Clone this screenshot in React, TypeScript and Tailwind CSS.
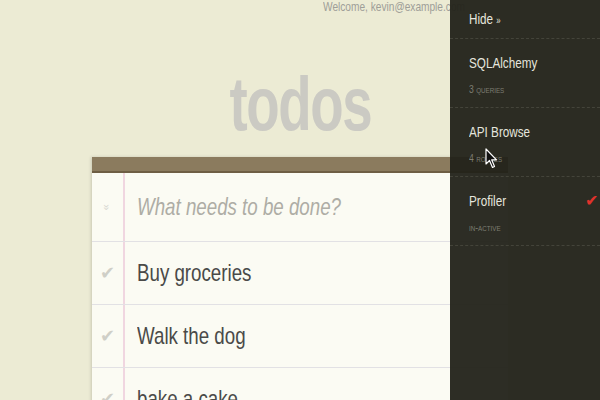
import React from 'react';

const font = { fontFamily: '"Liberation Sans", Arial, sans-serif' };

const todos = ['Buy groceries', 'Walk the dog', 'bake a cake'];

// the shot is squeezed sideways, so text gets a narrow look
function N({ children }: { children: React.ReactNode }) {
  return <span className="inline-block origin-left scale-x-[0.78] whitespace-nowrap">{children}</span>;
}

function Cursor() {
  return (
    <svg className="absolute left-[485px] top-[148px]" width="13" height="21" viewBox="0 0 13 21">
      <path d="M1 1 L1 16 L4.5 12.5 L7.5 19.5 L9.5 18.5 L6.7 11.8 L11.5 11.8 Z" fill="#111" stroke="#fff" strokeWidth="1.2" strokeLinejoin="round" />
    </svg>
  );
}

function PanelItem({ title, sub, active }: { title: string; sub: string; active?: boolean }) {
  return (
    <div className="h-[69px] border-b border-dashed border-[#44443a] pl-[19px] pr-[2px] pt-[15px]">
      <div className="flex items-center justify-between text-[15px] leading-[18px] text-[#e6e6de]">
        <N>{title}</N>
        {active && <span className="text-[16px] leading-[18px] text-[#e1322b]">✔</span>}
      </div>
      <div className="mt-[12px] text-[11px] leading-[10px] text-[#7d7d72] [font-variant:small-caps]">
        <N>{sub}</N>
      </div>
    </div>
  );
}

export default function App() {
  return (
    <div className="relative w-[600px] h-[400px] overflow-hidden bg-[#ecebd4]" style={font}>
      <div className="h-[13px] pl-[323px] text-[13px] leading-[13px] text-[#9e9e98]">
        <N>Welcome, kevin@example.com</N>
      </div>

      <h1 className="mt-[53px] text-center text-[76px] leading-[76px] font-bold tracking-[-2px] text-[#cbcac3]">
        <span className="inline-block scale-x-[0.72]">todos</span>
      </h1>

      <div className="mx-auto mt-[15px] w-[416px] shadow-[-1px_0_3px_rgba(0,0,0,0.15)]">
        <div className="h-[16px] bg-[#8b7b5e] border-b-2 border-[#6e5e44]"></div>
        <div className="bg-[#fbfbf3]">
          <div className="flex h-[69px] border-b border-[#e2e1e4]">
            <div className="flex w-[33px] items-center justify-center border-r-2 border-[#f0d6e0] text-[11px] text-[#d6d6d0]">
              <span className="rotate-90">»</span>
            </div>
            <div className="flex items-center pl-[12px] text-[24px] italic text-[#aeada5]">
              <N>What needs to be done?</N>
            </div>
          </div>
          {todos.map((t) => (
            <div key={t} className="flex h-[63px] border-b border-[#e2e1e4]">
              <div className="flex w-[33px] items-center justify-center border-r-2 border-[#f0d6e0] text-[18px] text-[#cfcfc7]">
                ✔
              </div>
              <div className="flex items-center pl-[12px] text-[24px] text-[#4a4a48]">
                <N>{t}</N>
              </div>
            </div>
          ))}
        </div>
      </div>

      <div className="absolute right-0 top-0 h-full w-[150px] bg-[#222219]/95">
        <div className="h-[39px] border-b border-dashed border-[#44443a] pl-[19px] pt-[10px] text-[15px] leading-[18px] text-[#e6e6de]">
          <N>
            Hide <span className="text-[10px]">»</span>
          </N>
        </div>
        <PanelItem title="SQLAlchemy" sub="3 queries" />
        <PanelItem title="API Browse" sub="4 routes" />
        <PanelItem title="Profiler" sub="in-active" active />
      </div>

      <Cursor />
    </div>
  );
}
